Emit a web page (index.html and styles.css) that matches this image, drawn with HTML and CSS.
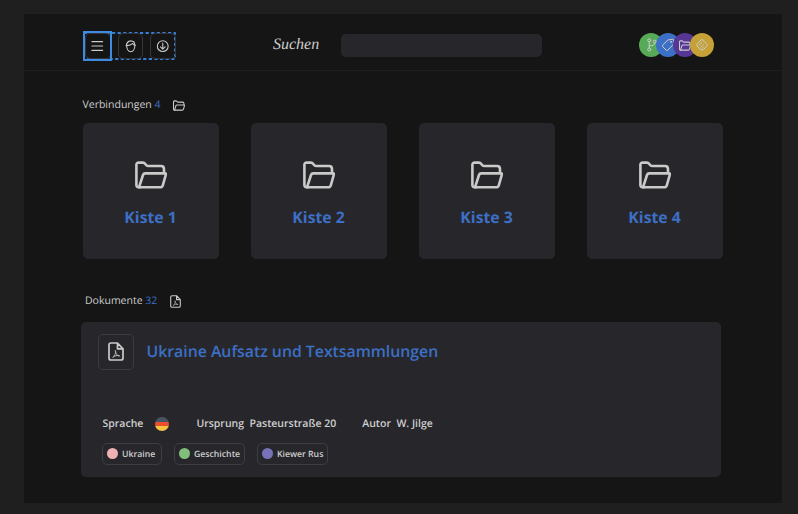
FILE: index.html
```html
<!DOCTYPE html>
<html lang="de">
<head>
<meta charset="utf-8">
<title>Dokumente</title>
<link rel="stylesheet" href="styles.css">
</head>
<body>
<svg class="defs" aria-hidden="true">
  <symbol id="folder" viewBox="0 0 32 28">
    <path d="M5 26.3 H3.6 Q1.4 26.3 1.4 24 V4 Q1.4 1.6 3.8 1.6 H8 C10.5 1.6 10.5 5 13 5 H26 Q29 5 29 8 V12"/>
    <path d="M4 26.3 L8 14 Q8.6 12.4 10.2 12.4 H30 Q31.2 12.4 30.8 13.8 L27.8 24.4 Q27.2 26.3 25.2 26.3 Z"/>
  </symbol>
  <symbol id="pdf" viewBox="0 0 16 19">
    <path d="M3 1 H9.5 L15 6.8 V16 Q15 18 13 18 H3 Q1 18 1 16 V3 Q1 1 3 1 Z M9.5 1 V6.8 H15"/>
    <path class="thin" d="M7.4 8.8 C8.6 9.8 7 13 4.8 15.5 C6 13.8 9.6 12.9 11.6 13.9 C9.8 14.3 7.4 12 7.4 8.8"/>
  </symbol>
</svg>
<main class="panel">
  <header class="header">
    <nav class="tools">
      <svg class="outline"><rect x="1" y="1" width="91" height="26"/></svg>
      <div class="tool"><svg viewBox="0 0 24 24"><path d="M6 7.5H17M6 12H17M6 16.5H17"/></svg></div>
      <div class="tool"><svg viewBox="0 0 24 24"><path d="M12 6.6C9.2 6.6 7.7 8.6 7.8 11.6C7.9 15 9.6 17.8 12 17.8S16.1 15 16.2 11.6C16.3 8.6 14.8 6.6 12 6.6ZM7.2 11.6C10 11.8 12.6 10.8 14 9.4C14.6 10.6 15.4 11.2 16.8 11.5M7.6 10C9 7 12 6 15.5 8"/></svg></div>
      <div class="tool"><svg viewBox="0 0 24 24"><circle cx="12" cy="12.2" r="5.5"/><path d="M12 9V15M9.6 12.8L12 15.2L14.4 12.8"/></svg></div>
      <div class="focus"></div>
    </nav>
    <label class="search-label" for="search">Suchen</label>
    <input class="search" id="search" type="text">
    <div class="badges">
      <div class="badge green"><svg viewBox="0 0 24 24"><circle cx="10.2" cy="7.3" r="1.5"/><circle cx="10.2" cy="16.5" r="1.5"/><circle cx="15.8" cy="8.6" r="1.5"/><path d="M10.2 8.8V15M15.8 10.1C15.8 12.6 13 12.4 10.2 13"/></svg></div>
      <div class="badge blue"><svg viewBox="0 0 24 24"><path d="M12 7L16.8 6.2Q17.6 6.2 17.6 7L17.3 11.4L11.8 17.2Q11 17.8 10.2 17.2L6.8 13.8Q6.2 13 6.8 12.2Z"/><circle cx="15" cy="8.9" r=".5"/></svg></div>
      <div class="badge purple"><svg class="badge-folder"><use href="#folder"/></svg></div>
      <div class="badge gold"><svg viewBox="0 0 24 24"><path d="M12.6 6.8L17.1 11.4Q17.7 12 17.1 12.6L13.8 16.3Q12 18 10.2 16.3L7 13Q6.2 12 7 11.1L11.2 6.8Q12 6.1 12.6 6.8ZM9 12.2L12 9.2M10.8 14L13.4 11.6M12 15.6L13.4 14.2"/></svg></div>
    </div>
  </header>

  <h2 class="heading">Verbindungen <span>4</span><svg class="folder-small"><use href="#folder"/></svg></h2>
  <section class="boxes">
    <article class="box"><svg><use href="#folder"/></svg><h3>Kiste 1</h3></article>
    <article class="box"><svg><use href="#folder"/></svg><h3>Kiste 2</h3></article>
    <article class="box"><svg><use href="#folder"/></svg><h3>Kiste 3</h3></article>
    <article class="box"><svg><use href="#folder"/></svg><h3>Kiste 4</h3></article>
  </section>

  <h2 class="heading documents">Dokumente <span>32</span><svg class="pdf-small"><use href="#pdf"/></svg></h2>
  <article class="document">
    <div class="title-row">
      <div class="file"><svg><use href="#pdf"/></svg></div>
      <h3>Ukraine Aufsatz und Textsammlungen</h3>
    </div>
    <div class="meta">
      <span>Sprache</span><i class="flag"></i>
      <span class="origin">Ursprung&nbsp; Pasteurstraße 20</span>
      <span>Autor&nbsp; W. Jilge</span>
    </div>
    <div class="tags">
      <span class="tag pink">Ukraine</span>
      <span class="tag leaf">Geschichte</span>
      <span class="tag violet">Kiewer Rus</span>
    </div>
  </article>
</main>
</body>
</html>
```
FILE: styles.css
```css
* { box-sizing: border-box; }
body {
  margin: 0;
  height: 514px;
  padding: 14px 16px 11px 24px;
  overflow: hidden;
  background: #1f1f1f;
  color: #cecece;
  font-family: "Open Sans", sans-serif;
  text-rendering: geometricPrecision;
}
h2, h3 { margin: 0; }
svg { display: block; fill: none; stroke: #cacaca; stroke-width: 1.1; stroke-linecap: round; stroke-linejoin: round; }
.defs { position: absolute; width: 0; height: 0; }
.panel { height: 489px; background: #151515; }

.header {
  display: flex;
  align-items: center;
  height: 57px;
  padding: 6px 68px 0 59px;
  border-bottom: 1px solid #1e1e1e;
}
.tools {
  position: relative;
  display: flex;
  gap: 7px;
  width: 93px;
  height: 28px;
  margin-top: 1px;
  padding: 1px 0 0 2px;
}
.outline { position: absolute; left: 0; top: 0; width: 93px; height: 28px; stroke: #3580d6; stroke-width: 2; stroke-dasharray: 3.2 2.4; stroke-linecap: butt; }
.tool {
  position: relative;
  flex: none;
  width: 25.5px;
  height: 26px;
  border: 1px solid #35353d;
  border-radius: 5px;
}
.tool svg { width: 23.5px; height: 24px; }
.focus { position: absolute; left: 0; top: -1px; width: 29px; height: 30px; border: 2px solid #3e8be2; }
.search-label {
  width: 68px;
  margin-left: 97px;
  font: italic 16px "Liberation Serif", serif;
  line-height: 24px;
}
.search { width: 201px; height: 23px; padding: 0 8px; border: 0; border-radius: 5px; background: #27272b; color: inherit; }
.badges { display: flex; margin-left: auto; }
.badge { width: 24px; height: 24px; border-radius: 50%; }
.badge + .badge { margin-left: -7px; }
.badge svg { width: 24px; height: 24px; stroke-width: 1; }
.badge .badge-folder { width: 12px; height: 11px; margin: 6.5px 0 0 6px; stroke-width: 2.8; }
.green { background: #57aa57; }
.blue { background: #3c70c6; }
.purple { background: #573796; }
.gold { background: #c5a136; }

.heading {
  display: flex;
  align-items: center;
  height: 16px;
  margin: 26px 0 0 58.5px;
  font-size: 10.5px;
  font-weight: 400;
  white-space: pre;
}
.heading span { color: #3c6fc5; }
.folder-small { width: 12px; height: 11px; margin-left: 12px; stroke-width: 2.8; }
.pdf-small { width: 11px; height: 13px; margin-left: 13px; stroke-width: 1.6; }
.thin { stroke-width: .9; }

.boxes { display: grid; grid-template-columns: repeat(4, 136px); gap: 32px; margin: 10px 0 0 58.6px; }
.box {
  display: flex;
  flex-direction: column;
  align-items: center;
  height: 136px;
  padding-top: 38px;
  border-radius: 5px;
  background: #27272b;
}
.box svg { width: 32px; height: 28px; stroke-width: 2.6; }
.box h3 { margin-top: 17px; color: #3c6fc5; font-size: 15.8px; font-weight: 700; line-height: 22px; }

.documents { margin: 34px 0 0 61px; }
.document { width: 640px; height: 155px; margin: 12.5px 0 0 57px; padding: 12px 0 0 17px; border-radius: 5px; background: #27272b; }
.title-row { display: flex; align-items: center; gap: 12.5px; }
.title-row h3 { margin-top: -1px; color: #3c6fc5; font-size: 15.8px; font-weight: 600; line-height: 24px; }
.file { display: grid; place-items: center; width: 36px; height: 36px; border: 1px solid #3b3b43; border-radius: 5px; }
.file svg { width: 16px; height: 19px; stroke-width: 1.7; }
.meta { display: flex; align-items: center; height: 16px; margin: 46px 0 0 4.5px; font-size: 10.5px; font-weight: 600; }
.flag { width: 14px; height: 14px; margin-left: 11.5px; border-radius: 50%; background: linear-gradient(#465563 0 34%, #ec4f2d 34% 67%, #f6c342 67%); }
.origin { margin: 0 26px 0 27.5px; }
.tags { display: flex; gap: 12px; margin: 11px 0 0 4px; }
.tag { display: flex; align-items: center; gap: 4px; width: 71px; height: 22px; padding-left: 4px; border: 1px solid #3d3d46; border-radius: 5px; font-size: 8.7px; font-weight: 600; white-space: nowrap; }
.tag::before { content: ""; flex: none; width: 11px; height: 11px; border-radius: 50%; }
.tag.pink { width: 60px; }
.pink::before { background: #efb1b3; }
.leaf::before { background: #83bd7d; }
.violet::before { background: #7673b9; }
```
